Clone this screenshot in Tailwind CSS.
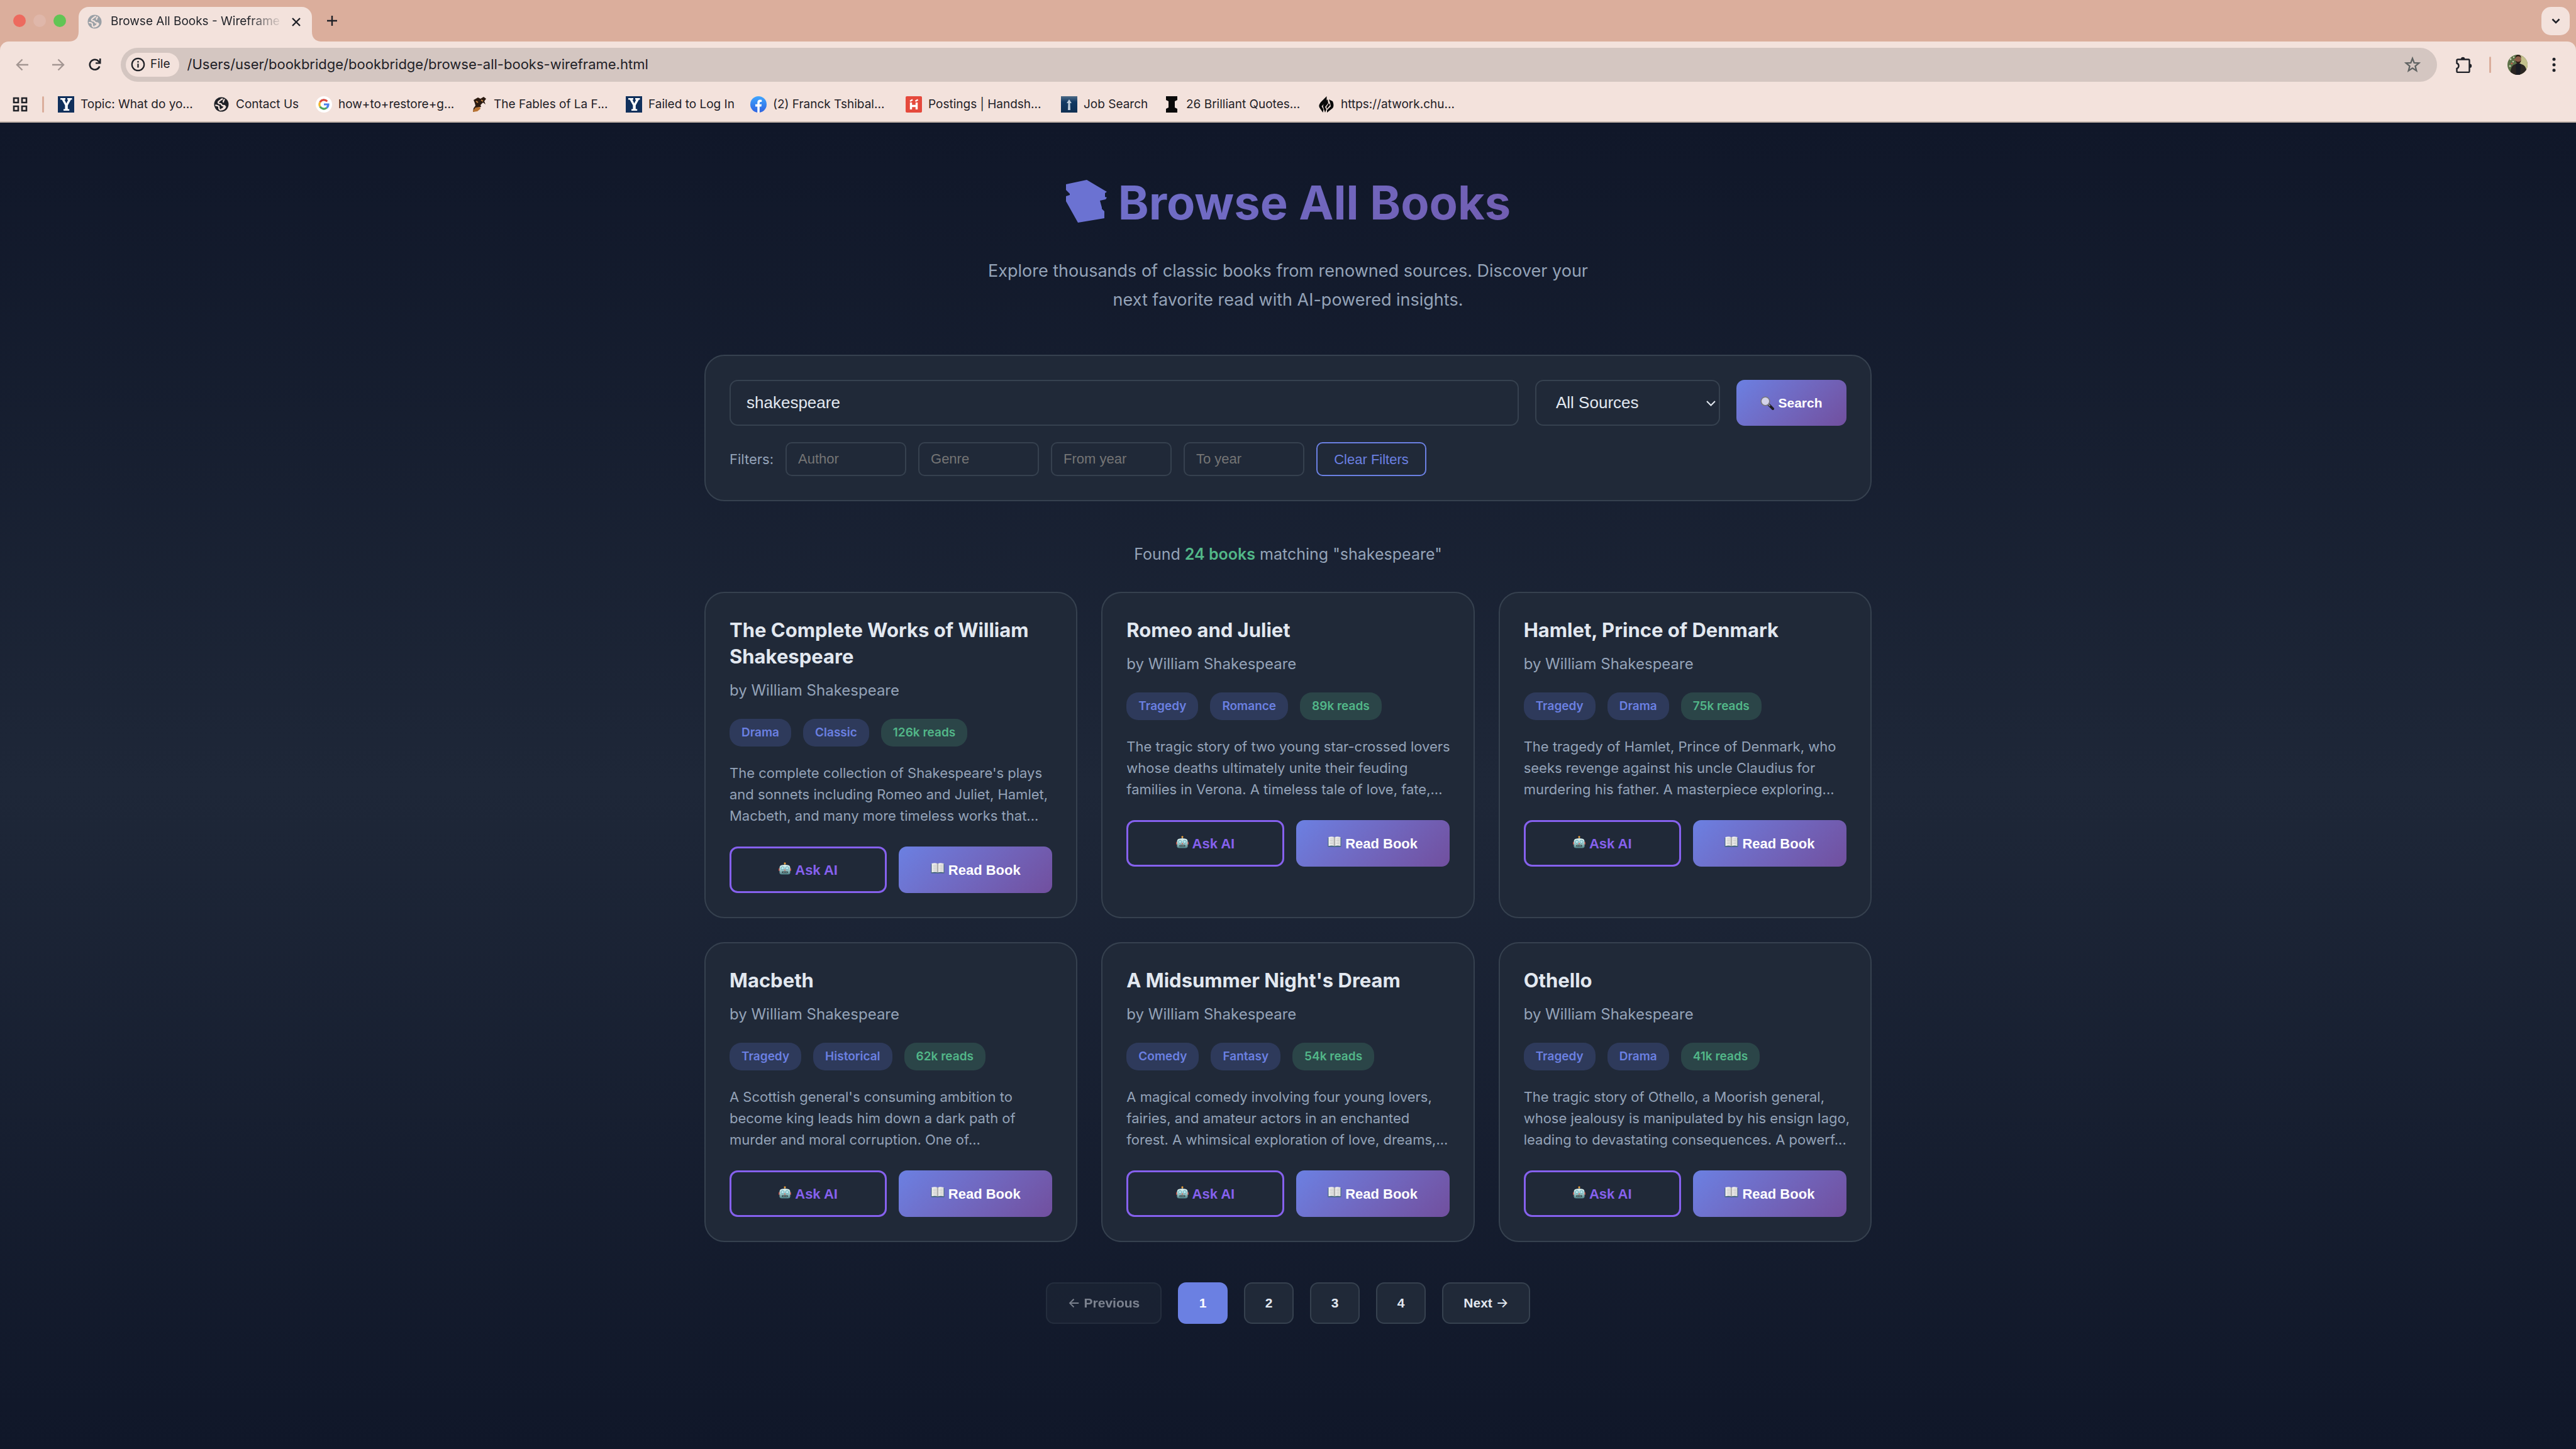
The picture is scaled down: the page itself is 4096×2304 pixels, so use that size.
<!DOCTYPE html>
<html lang="en">
<head>
<meta charset="utf-8">
<title>Browse All Books - Wireframe</title>
<script src="https://cdn.jsdelivr.net/npm/@tailwindcss/browser@4"></script>
</head>
<body class="min-h-screen flex flex-col bg-[#101729] font-['Inter',sans-serif] text-[#e2e8f0]">

<svg class="absolute size-0" aria-hidden="true">
  <defs>
    <linearGradient id="robotFace" x1="0" y1="0" x2="0" y2="1"><stop offset="0" stop-color="#dff3f2"/><stop offset=".45" stop-color="#a9d3d4"/><stop offset="1" stop-color="#4d7f84"/></linearGradient>
    <linearGradient id="page" x1="0" y1="0" x2="1" y2="0"><stop offset="0" stop-color="#f4f4f2"/><stop offset=".4" stop-color="#e4e4e2"/><stop offset=".5" stop-color="#9a9a9a"/><stop offset=".6" stop-color="#f4f4f2"/><stop offset="1" stop-color="#dcdcda"/></linearGradient>
    <linearGradient id="blue" x1="0" y1="0" x2="0" y2="1"><stop offset="0" stop-color="#3fa6ff"/><stop offset="1" stop-color="#2f63e0"/></linearGradient>
    <linearGradient id="jobs" x1="0" y1="0" x2="0" y2="1"><stop offset="0" stop-color="#4d6a86"/><stop offset=".35" stop-color="#123a63"/><stop offset="1" stop-color="#0f2f52"/></linearGradient>
  </defs>
  <symbol id="robot" viewBox="0 0 20 20">
    <path d="M10 2v4" stroke="#9aa5a8" stroke-width="1.2"/>
    <circle cx="10" cy="1.8" r="1.6" fill="#f0a43c"/>
    <rect x="0" y="9.5" width="2" height="4.5" rx="1" fill="#c4483e"/><rect x="18" y="9.5" width="2" height="4.5" rx="1" fill="#c4483e"/>
    <path d="M4.5 4.8Q10 3.2 15.500 4.800Q18.500 5.500 18.500 9v7.500Q18.500 19.500 15 19.500H5Q1.500 19.500 1.500 16.500V9Q1.500 5.500 4.500 4.800Z" fill="url(#robotFace)"/>
    <circle cx="6.300" cy="9.500" r="2.300" fill="#eefafa" stroke="#4fa3b3" stroke-width="1"/><circle cx="13.700" cy="9.500" r="2.300" fill="#eefafa" stroke="#4fa3b3" stroke-width="1"/>
    <circle cx="6.300" cy="9.500" r=".8" fill="#5cc0d0"/><circle cx="13.700" cy="9.500" r=".8" fill="#5cc0d0"/>
    <path d="M10 10.800l1.400 2.400H8.600Z" fill="#d9534a"/>
    <rect x="5.500" y="14.500" width="9" height="2.800" rx="1" fill="#24393c"/>
    <path d="M7.200 15.900h1M9.500 15.900h1M11.800 15.900h1" stroke="#e8f4f4" stroke-width="1.400"/>
  </symbol>
  <symbol id="openbook" viewBox="0 0 22 18">
    <path d="M.5 2v14.500h9.500q1 .9 2 0h9.500V2Z" fill="#3f6277"/>
    <path d="M1.500 1Q7-.8 11 1.200Q15-.8 20.500 1v14.200Q15 13.800 11 15.600Q7 13.800 1.500 15.200Z" fill="url(#page)"/>
    <path d="M3.500 4h5M3.500 6.500h5M3.500 9h5M3.500 11.500h5M13.500 4h5M13.500 6.500h5M13.500 9h5M13.500 11.500h5" stroke="#b5b5b5" stroke-width=".7"/>
  </symbol>
  <symbol id="yale" viewBox="0 0 26 26">
    <rect width="26" height="26" fill="#10305c"/>
    <path d="M4 3h8v2.500h-1.500l3 6 3-6H15V3h7.500v2.500h-1.700l-5 9V20.500h2.400V23H9v-2.500h2.400v-6l-5-9H4Z" fill="#fff"/>
  </symbol>
  <symbol id="globe" viewBox="0 0 24 24">
    <circle cx="12" cy="12" r="11.500" fill="currentColor"/>
    <path d="M13.500 3.500c-2 .3-2.500 1.500-3.800 2.400-1.200 1-3.200 1.600-2.700 3.600.4 1.500 2.600 1.200 4 1.500 1.700.4.900 2.300 2.600 2.900 1.300.4 2.400-.3 3.700.4M3.200 13.500c1.500.2 3.500.2 4.600 1.500.8 1.100 0 2.600.5 3.800.4.900 1.200 1.200 1.700 2M16.500 4.500c-.4 1.500-1.800 1.800-1.300 3.500" fill="none" stroke="#f3e2dc" stroke-width="2.300" stroke-linecap="round"/>
    <path d="M17.500 13.800c-2.500.5-2.300 2.500-3.500 3.600-1 .8-2.200.6-2.700 1.700l-.5 2.600c4 .2 8-2.200 8.900-6.200Z" fill="#f3e2dc"/>
  </symbol>
</svg>

<!-- Browser window -->
<header class="shrink-0 bg-[#dbae9c] text-[#1f2127] text-[19px]">
  <div class="flex h-[66px] items-end">
    <div class="flex h-[66px] w-[109px] items-center gap-3 pl-[21px]">
      <span class="size-5 rounded-full bg-[#ed6a5e]"></span>
      <span class="size-5 rounded-full bg-[#dfb7aa]"></span>
      <span class="size-5 rounded-full bg-[#61c554]"></span>
    </div>
    <svg class="size-4 shrink-0" viewBox="0 0 16 16"><path d="M16 0v16H0Q16 16 16 0Z" fill="#f3e2dc"/></svg>
    <div class="flex h-[55px] w-[371px] items-center rounded-t-[16px] bg-[#f3e2dc] pl-[14px] pr-[17px] pb-2">
      <svg class="size-[23px] shrink-0 text-[#9aa0a6]"><use href="#globe"/></svg>
      <span class="ml-[14px] w-[274px] whitespace-nowrap bg-linear-to-r from-[#1f2127] from-80% to-transparent bg-clip-text text-transparent">Browse All Books - Wireframe</span>
      <button aria-label="Close tab" class="ml-auto"><svg class="size-4" viewBox="0 0 16 16"><path d="M2 2l12 12M14 2L2 14" stroke="#1f2127" stroke-width="2.400"/></svg></button>
    </div>
    <svg class="size-4 shrink-0" viewBox="0 0 16 16"><path d="M0 0v16H16Q0 16 0 0Z" fill="#f3e2dc"/></svg>
    <button aria-label="New tab" class="mb-[25px] ml-2"><svg class="size-4" viewBox="0 0 16 16"><path d="M8 0v16M0 8h16" stroke="#1f2127" stroke-width="2.400"/></svg></button>
    <button aria-label="Search tabs" class="mb-[10px] ml-auto mr-[10px] flex size-[45px] items-center justify-center rounded-[15px] bg-[#f3e2dc]"><svg class="h-[9px] w-[14px]" viewBox="0 0 14 9"><path d="M1.500 1.500L7 7l5.500-5.500" fill="none" stroke="#1f2127" stroke-width="2.600"/></svg></button>
  </div>

  <div class="rounded-t-[14px] border-b-2 border-[#c3b5ab] bg-[#f3e2dc]">
    <div class="flex h-[73px] items-center pl-[25px] pr-8">
      <button aria-label="Back"><svg class="size-5" viewBox="0 0 20 20"><path d="M10.500 1.500L2 10l8.500 8.500M2 10h18" fill="none" stroke="#a39692" stroke-width="2.400"/></svg></button>
      <button aria-label="Forward" class="ml-[38px]"><svg class="size-5" viewBox="0 0 20 20"><path d="M9.500 1.500L18 10l-8.500 8.500M18 10H0" fill="none" stroke="#a39692" stroke-width="2.400"/></svg></button>
      <button aria-label="Reload" class="ml-[38px]"><svg class="size-5" viewBox="0 0 20 20"><path d="M17.300 12.500A8 8 0 1 1 15.800 4.500l2.200 2.500" fill="none" stroke="#1f2127" stroke-width="2.600"/><path d="M19.500 0v8.500H11V6.200h6V0Z" fill="#1f2127"/></svg></button>
      <div class="ml-[31px] flex h-[54px] flex-1 items-center rounded-full bg-[#d4c6c1] pl-2 pr-[26px]">
        <button class="flex h-[38px] items-center gap-2 rounded-full bg-[#f3e2dc] pl-2 pr-[14px]">
          <svg class="size-[23px]" viewBox="0 0 23 23"><circle cx="11.500" cy="11.500" r="9.700" fill="none" stroke="#1f2127" stroke-width="2.200"/><path d="M11.500 10.200v6.300M11.500 6v2.400" stroke="#1f2127" stroke-width="2.200"/></svg>File
        </button>
        <input aria-label="Address" class="ml-[13px] flex-1 bg-transparent text-[22px] outline-none" value="/Users/user/bookbridge/bookbridge/browse-all-books-wireframe.html">
        <button aria-label="Bookmark this page"><svg class="size-[26px]" viewBox="0 0 26 26"><path d="M13 2.800l2.700 7 7.500.5-5.800 4.800 1.900 7.300L13 18.300l-6.300 4.100 1.900-7.300-5.800-4.800 7.500-.5Z" fill="none" stroke="#5f6362" stroke-width="2.300"/></svg></button>
      </div>
      <button aria-label="Extensions" class="ml-[30px]"><svg class="size-[26px]" viewBox="0 0 26 26"><path d="M3.500 4.500H20a1.500 1.500 0 0 1 1.500 1.500V23.500a1.500 1.500 0 0 1-1.500 1.500H3a1.500 1.500 0 0 1-1.500-1.500V19a4.500 4.500 0 0 0 0-8.500V6A1.500 1.500 0 0 1 3 4.500Z" fill="none" stroke="#1f2127" stroke-width="2.400"/><path d="M8 4a3.200 3.200 0 0 1 6.400 0ZM22 11.500a3.200 3.200 0 0 1 0 6.400Z" fill="#1f2127"/></svg></button>
      <span class="ml-[27px] h-[26px] w-[3px] rounded-full bg-[#dbae9c]"></span>
      <button aria-label="Profile" class="ml-[26px]"><svg class="size-8 rounded-full" viewBox="0 0 32 32"><rect width="32" height="32" fill="#5d7148"/><rect x="19" width="13" height="32" fill="#c3c08c"/><g fill="#c9d3b4"><circle cx="5" cy="7" r="1.500"/><circle cx="9" cy="11" r="1.200"/><circle cx="4" cy="18" r="1.500"/><circle cx="10" cy="4" r="1.200"/></g><g fill="#c9574f"><circle cx="7" cy="14" r="1.300"/><circle cx="12" cy="8" r="1"/></g><path d="M5 32Q4 17 13 15l4-2 5 2q9 2 9 17Z" fill="#2a2522"/><path d="M13 15l4-2 4.500 2L20 32h-6Z" fill="#1a1c24"/><ellipse cx="17.200" cy="7.500" rx="4.600" ry="6" fill="#8d5f4b"/><path d="M12.600 5.500Q12.500 0 17.200 0t4.600 5.500Q20.500 2.500 17.200 2.500T12.600 5.500ZM12.700 9q.8 5 4.500 5t4.500-5q-1.500 2.200-4.500 2.200T12.700 9Z" fill="#2b1d18"/></svg></button>
      <button aria-label="Menu" class="ml-[39px]"><svg class="h-[24px] w-[6px]" viewBox="0 0 6 24"><g fill="#1f2127"><circle cx="3" cy="3.200" r="2.500"/><circle cx="3" cy="12" r="2.500"/><circle cx="3" cy="20.800" r="2.500"/></g></svg></button>
    </div>

    <nav aria-label="Bookmarks" class="flex h-[54px] items-center pl-[20px] whitespace-nowrap">
      <button aria-label="Tab groups"><svg class="size-[24px]" viewBox="0 0 24 24"><path d="M2 2h7v7H2ZM15 2h7v7h-7ZM2 15h7v7H2ZM15 15h7v7h-7Z" fill="none" stroke="#1f2127" stroke-width="2.600"/></svg></button>
      <span class="ml-[23px] h-[26px] w-[3px] rounded-full bg-[#dbae9c]"></span>
      <a href="#" class="ml-[22px] flex w-[247px] items-center gap-[10px]"><svg class="size-[26px]"><use href="#yale"/></svg>Topic: What do yo...</a>
      <a href="#" class="flex w-[163px] items-center gap-[10px]"><svg class="size-[26px] p-px"><use href="#globe"/></svg>Contact Us</a>
      <a href="#" class="flex w-[247px] items-center gap-[10px]"><svg class="size-[26px]" viewBox="0 0 26 26"><circle cx="13" cy="13" r="13" fill="#fff"/><g fill="none" stroke-width="3.200"><path d="M18.300 8.300A7 7 0 0 0 6.900 9.500" stroke="#dc4a3d"/><path d="M6.900 9.500a7 7 0 0 0 0 7" stroke="#f0b52c"/><path d="M6.900 16.500a7 7 0 0 0 10.600 1.900" stroke="#4ba35c"/><path d="M17.500 18.400A7 7 0 0 0 20 13h-7" stroke="#4c80ec"/></g></svg>how+to+restore+g...</a>
      <a href="#" class="flex w-[246px] items-center gap-[10px]"><svg class="size-[26px]" viewBox="0 0 26 26"><path d="M4 6l7-4 4 2 5-3 4 3-3 4 2 5-4-3-4 4 1 3-6 1-1 5-6 2 1-6 3-4-1-4Z" fill="#2a1a10"/><path d="M3 23l4-5 7-1 1 3-5 4-7 1Z" fill="#b87333"/><path d="M16 6l3 2M8 8l3 2" stroke="#c98a4a" stroke-width="2"/></svg>The Fables of La F...</a>
      <a href="#" class="flex w-[198px] items-center gap-[10px]"><svg class="size-[26px]"><use href="#yale"/></svg>Failed to Log In</a>
      <a href="#" class="flex w-[247px] items-center gap-[10px]"><svg class="size-[26px]" viewBox="0 0 26 26"><circle cx="13" cy="13" r="13" fill="url(#blue)"/><path d="M11.300 26v-9.500H8v-3.800h3.300V10q0-4.500 4.300-4.500 1.300 0 2.600.3V9h-1.600q-1.800 0-1.800 1.800v1.900h3.300l-.6 3.800h-2.700V26Z" fill="#fff"/></svg>(2) Franck Tshibal...</a>
      <a href="#" class="flex w-[247px] items-center gap-[10px]"><svg class="size-[26px]" viewBox="0 0 26 26"><rect width="26" height="26" rx="2" fill="#e5493c"/><path d="M8.500 10v11M17.500 10v11M8.500 15.500h9" stroke="#fff" stroke-width="3.400"/><path d="M7 8l4-2.500M15.500 8l4-2.500" stroke="#fff" stroke-width="2.400"/></svg>Postings | Handsh...</a>
      <a href="#" class="flex w-[163px] items-center gap-[10px]"><svg class="size-[26px]" viewBox="0 0 26 26"><rect width="26" height="26" fill="url(#jobs)"/><path d="M13 5l4 6h-2.500l.5 11h-4l.5-11H9Z" fill="#bccbd8"/></svg>Job Search</a>
      <a href="#" class="flex w-[246px] items-center gap-[10px]"><svg class="size-[26px]" viewBox="0 0 26 26"><path d="M4 0h18v6l-4 2v10l4 2v6H4v-6l4-2V8L4 6Z" fill="#0a0a0a"/></svg>26 Brilliant Quotes...</a>
      <a href="#" class="flex items-center gap-[10px]"><svg class="size-[26px]" viewBox="0 0 26 26"><path d="M13.500 0L4.500 9Q0 14 2 18L7.500 26l1-5L5.500 16l8-8ZM15 5L9 12l-1.500 4L11 26l2-5-2-4 5-6ZM17 5l6 3q3 7 0 11l-9 7 0-4 6-6-1-5ZM17 11l2 3-5 6-1-3Z" fill="#0a0a0a"/></svg>https://atwork.chu...</a>
    </nav>
  </div>
</header>

<div class="flex-1 bg-linear-to-b from-[#101729] via-[#1e2738] to-[#101729] px-8">
<main class="mx-auto w-full max-w-[1856px] pt-[81px] pb-[60px]">
  <h1 class="mb-10 flex h-[92px] items-center justify-center gap-[18px] bg-linear-135 from-[#6b80e2] to-[#714f9e] bg-clip-text text-[74px] leading-[92px] font-bold whitespace-nowrap text-transparent">
    <svg class="mb-1 h-[68px] w-[66px]" viewBox="0 0 66 68" aria-hidden="true"><path d="M1 7L34 0L66 19L63 21V27L66 28L64 31L55 33L58 44V46L62 50V61L20 68L1 34V26L7 24V22L1 16Z" fill="#6b72d2"/></svg>Browse All Books
  </h1>
  <p class="mb-16 text-center text-[27px] leading-[46px] text-[#94a3b8]">Explore thousands of classic books from renowned sources. Discover your<br>next favorite read with AI-powered insights.</p>

  <form class="rounded-[32px] border-2 border-[#36414f] bg-[#202938] p-[38px] font-['Liberation_Sans',sans-serif]" onsubmit="return false">
    <div class="flex h-[73px] gap-[26px]">
      <input aria-label="Search books" value="shakespeare" class="flex-1 rounded-[13px] border-2 border-[#36414f] bg-[#202938] px-[25px] text-[26px] text-[#e2e8f0]">
      <div class="relative w-[294px]">
        <select aria-label="Source" class="size-full appearance-none rounded-[13px] border-2 border-[#36414f] bg-[#202938] pl-[31px] text-[26px] text-[#e2e8f0]"><option>All Sources</option></select>
        <svg class="pointer-events-none absolute top-[33px] right-[7px] h-[9px] w-[15px]" viewBox="0 0 15 9"><path d="M1 1l6.500 6.500L14 1" fill="none" stroke="#e2e8f0" stroke-width="2"/></svg>
      </div>
      <button class="flex w-[175px] items-center justify-center gap-[6px] rounded-[13px] bg-linear-135 from-[#6b80e2] to-[#714f9e] text-[21px] font-bold text-white">
        <svg class="size-[22px]" viewBox="0 0 22 22" aria-hidden="true"><path d="M14 14l6 6" stroke="#1d1d22" stroke-width="4" stroke-linecap="round"/><path d="M12.500 12.500l3 3" stroke="#8a8a90" stroke-width="2"/><circle cx="8" cy="8" r="6.800" fill="#d3d3ea" stroke="#77777c" stroke-width="1.600"/></svg>Search
      </button>
    </div>
    <div class="mt-[26px] flex h-[54px] items-center gap-[19px] text-[22px] text-[#94a3b8]">
      <span class="font-['Inter',sans-serif]">Filters:</span>
      <input aria-label="Author" placeholder="Author" class="h-full w-[192px] rounded-[10px] border-2 border-[#36414f] bg-[#202938] px-[18px] placeholder:text-[#757575]">
      <input aria-label="Genre" placeholder="Genre" class="h-full w-[192px] rounded-[10px] border-2 border-[#36414f] bg-[#202938] px-[18px] placeholder:text-[#757575]">
      <input aria-label="From year" placeholder="From year" class="h-full w-[192px] rounded-[10px] border-2 border-[#36414f] bg-[#202938] px-[18px] placeholder:text-[#757575]">
      <input aria-label="To year" placeholder="To year" class="h-full w-[192px] rounded-[10px] border-2 border-[#36414f] bg-[#202938] px-[18px] placeholder:text-[#757575]">
      <button type="reset" class="h-full w-[175px] rounded-[10px] border-2 border-[#6b80e2] text-[#6b80e2]">Clear Filters</button>
    </div>
  </form>

  <p class="mt-16 text-center text-[25px] leading-[41px] text-[#94a3b8]">Found <strong class="font-semibold text-[#52b788]">24 books</strong> matching "shakespeare"</p>

  <section id="books" class="mt-[39px] grid grid-cols-3 gap-[38px]"></section>

  <nav aria-label="Pages" class="mt-16 flex h-[66px] justify-center gap-[26px] font-['Liberation_Sans',sans-serif] text-[21px] font-bold">
    <button disabled class="w-[184px] rounded-[13px] border-2 border-[#36414f] bg-[#202938] opacity-50"><span class="font-['Inter',sans-serif] font-medium">←</span> Previous</button>
    <button aria-current="page" class="w-[79px] rounded-[13px] bg-[#6b80e2] text-white">1</button>
    <button class="w-[79px] rounded-[13px] border-2 border-[#36414f] bg-[#202938]">2</button>
    <button class="w-[79px] rounded-[13px] border-2 border-[#36414f] bg-[#202938]">3</button>
    <button class="w-[79px] rounded-[13px] border-2 border-[#36414f] bg-[#202938]">4</button>
    <button class="w-[140px] rounded-[13px] border-2 border-[#36414f] bg-[#202938]">Next <span class="font-['Inter',sans-serif] font-medium">→</span></button>
  </nav>
</main>
</div>

<script>
const books = [
  ['The Complete Works of William<br>Shakespeare', ['Drama', 'Classic'], '126k reads', "The complete collection of Shakespeare's plays<br>and sonnets including Romeo and Juliet, Hamlet,<br>Macbeth, and many more timeless works that..."],
  ['Romeo and Juliet', ['Tragedy', 'Romance'], '89k reads', 'The tragic story of two young star-crossed lovers<br>whose deaths ultimately unite their feuding<br>families in Verona. A timeless tale of love, fate,...'],
  ['Hamlet, Prince of Denmark', ['Tragedy', 'Drama'], '75k reads', 'The tragedy of Hamlet, Prince of Denmark, who<br>seeks revenge against his uncle Claudius for<br>murdering his father. A masterpiece exploring...'],
  ['Macbeth', ['Tragedy', 'Historical'], '62k reads', "A Scottish general's consuming ambition to<br>become king leads him down a dark path of<br>murder and moral corruption. One of..."],
  ["A Midsummer Night's Dream", ['Comedy', 'Fantasy'], '54k reads', 'A magical comedy involving four young lovers,<br>fairies, and amateur actors in an enchanted<br>forest. A whimsical exploration of love, dreams,...'],
  ['Othello', ['Tragedy', 'Drama'], '41k reads', 'The tragic story of Othello, a Moorish general,<br>whose jealousy is manipulated by his ensign Iago,<br>leading to devastating consequences. A powerf...']
];
document.getElementById('books').innerHTML = books.map(([title, tags, reads, text]) => `
  <article class="rounded-[32px] border-2 border-[#36414f] bg-[#202938] p-[38px] whitespace-nowrap">
    <h2 class="text-[31px] leading-[42px] font-bold">${title}</h2>
    <p class="mt-3 text-[24px] leading-[41px] text-[#94a3b8]">by William Shakespeare</p>
    <div class="mt-[25px] flex h-11 gap-[19px] text-[19px] leading-[44px] font-semibold">
      ${tags.map(t => `<span class="rounded-[19px] bg-[#2e3a5b] px-[19px] text-[#6b80e2]">${t}</span>`).join('')}
      <span class="rounded-[19px] bg-[#2b4548] px-[19px] text-[#52b788]">${reads}</span>
    </div>
    <p class="mt-[25px] text-[22px] leading-[34px] text-[#94a3b8]">${text}</p>
    <div class="mt-8 flex h-[74px] gap-[19px] font-['Liberation_Sans',sans-serif] text-[22px] font-bold">
      <button class="box-content flex h-[68px] flex-1 items-center justify-center gap-[6px] rounded-[13px] border-3 border-[#8661ee] text-[#8661ee]"><svg class="mb-1 size-5"><use href="#robot"/></svg>Ask AI</button>
      <button class="box-content flex h-[74px] flex-1 items-center justify-center gap-[6px] rounded-[13px] bg-linear-135 from-[#6b80e2] to-[#714f9e] text-white"><svg class="mb-1 h-[18px] w-[22px]"><use href="#openbook"/></svg>Read Book</button>
    </div>
  </article>`).join('');
</script>
</body>
</html>
